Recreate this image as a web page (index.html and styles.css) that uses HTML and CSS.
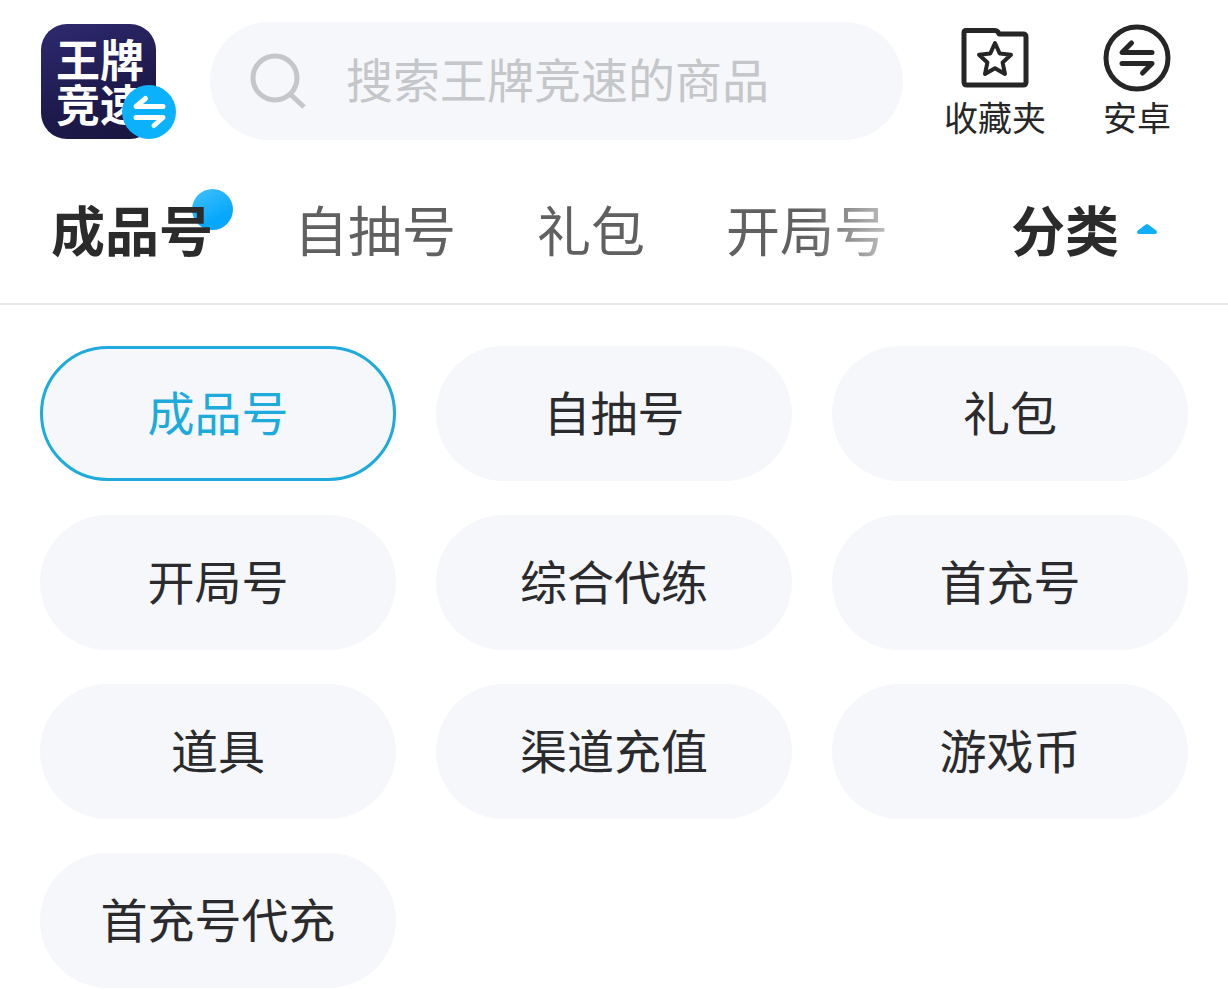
FILE: index.html
```html
<!DOCTYPE html>
<html lang="zh-CN">
<head>
    <meta charset="UTF-8">
    <meta name="viewport" content="width=device-width, initial-scale=1.0">
    <title>王牌竞速</title>
    <link rel="stylesheet" href="styles.css">
</head>
<body>
    <!-- Top bar: game logo, search, shortcuts -->
    <header class="header">
        <button class="game" aria-label="切换游戏">
            <span class="game-name">王牌<br>竞速</span>
            <svg class="game-switch" viewBox="0 0 54 54" fill="none" stroke="#fff" stroke-width="5" stroke-linecap="round" stroke-linejoin="round">
                <circle cx="27" cy="27" r="27" fill="#0bb2fb" stroke="none"/>
                <path d="M23.500 13.500 14 21.500H41M14 32.500H41L32 40.500"/>
            </svg>
        </button>

        <form class="search" role="search">
            <svg class="search-icon" viewBox="0 0 56 56" fill="none" stroke="#c5c6c9" stroke-width="5">
                <circle cx="25" cy="25" r="22"/>
                <path d="M39 40 54 54"/>
            </svg>
            <input class="search-input" type="text" placeholder="搜索王牌竞速的商品" aria-label="搜索">
        </form>

        <button class="action">
            <svg class="action-icon" viewBox="0 0 68 68" fill="none" stroke="#262626" stroke-width="5" stroke-linejoin="round" stroke-linecap="round">
                <path d="M5 6.500H34Q36 6.500 37 8L38 10H62Q65 10 65 13V58Q65 61 62 61H6Q3 61 3 58V9Q3 6.500 5 6.500Z"/>
                <path stroke-width="4" d="M34 19 38.700 29.500 50 30.800 41.600 38.500 44 50 34 44.200 24 50 26.400 38.500 18 30.800 29.300 29.500Z"/>
            </svg>
            <span>收藏夹</span>
        </button>
        <button class="action">
            <svg class="action-icon" viewBox="0 0 68 68" fill="none" stroke="#262626" stroke-width="5" stroke-linejoin="round" stroke-linecap="round">
                <circle cx="34" cy="34" r="31"/>
                <path d="M28.500 19 19 28.500H49M19 39.500H49L39.500 49"/>
            </svg>
            <span>安卓</span>
        </button>
    </header>

    <!-- Category tabs -->
    <nav class="tabs">
        <div class="tab-list">
            <a class="tab active" href="#">成品号</a>
            <a class="tab" href="#">自抽号</a>
            <a class="tab" href="#">礼包</a>
            <a class="tab" href="#">开局号</a>
        </div>
        <button class="toggle">
            分类
            <svg class="toggle-arrow" viewBox="0 0 22 12"><path fill="#0fb0f5" stroke="#0fb0f5" stroke-width="4" stroke-linejoin="round" d="M11 3 19 9H3Z"/></svg>
        </button>
    </nav>

    <!-- Expanded category list -->
    <main class="categories">
        <button class="category selected">成品号</button>
        <button class="category">自抽号</button>
        <button class="category">礼包</button>
        <button class="category">开局号</button>
        <button class="category">综合代练</button>
        <button class="category">首充号</button>
        <button class="category">道具</button>
        <button class="category">渠道充值</button>
        <button class="category">游戏币</button>
        <button class="category">首充号代充</button>
    </main>
</body>
</html>
```
FILE: styles.css
```css
* {
    box-sizing: border-box;
}
body {
    margin: 0;
    background-color: #fff;
    color: #2b2b2e;
    font-family: "Noto Sans CJK SC", sans-serif;
}
button,
input {
    padding: 0;
    border: none;
    background: none;
    color: inherit;
    font-family: inherit;
}
button {
    cursor: pointer;
}
a {
    color: inherit;
    text-decoration: none;
}
svg {
    display: block;
    flex: none;
}

/* Header */
.header {
    display: flex;
    align-items: center;
    padding: 21px 57px 0 41px;
}
.game {
    position: relative;
    flex: none;
    width: 115px;
    height: 115px;
    padding-left: 15px;
    border-radius: 26px;
    background: linear-gradient(160deg, #2f2a70, #1d1a4c 60%, #19163f);
    color: #fff;
    text-align: left;
}
.game-name {
    display: block;
    font-size: 44px;
    font-weight: bold;
    line-height: 45px;
    white-space: nowrap;
}
.game-switch {
    position: absolute;
    right: -20px;
    bottom: 0;
    width: 54px;
    height: 54px;
}
.search {
    display: flex;
    flex: 1;
    align-items: center;
    gap: 40px;
    min-width: 0;
    height: 118px;
    margin: 0 41px 0 54px;
    padding: 0 40px;
    border-radius: 59px;
    background-color: #f5f7fb;
}
.search-icon {
    width: 56px;
    height: 56px;
}
.search-input {
    flex: 1;
    min-width: 0;
    height: 80px;
    padding-bottom: 8px;
    font-size: 47px;
    outline: none;
}
.search-input::placeholder {
    color: #c5c6c9;
    opacity: 1;
}
.action {
    display: flex;
    flex: none;
    flex-direction: column;
    align-items: center;
    padding-top: 3px;
    color: #262626;
    font-size: 34px;
    line-height: 49px;
}
.action + .action {
    margin-left: 57px;
}
.action-icon {
    width: 68px;
    height: 68px;
}

/* Tabs */
.tabs {
    display: flex;
    align-items: center;
    justify-content: space-between;
    height: 164px;
    padding: 14px 70px 0 51px;
    border-bottom: 2px solid #e8e8e8;
    font-size: 54px;
    line-height: 80px;
}
.tab-list {
    display: flex;
    gap: 81px;
    overflow: hidden;
    padding: 20px 0;
    white-space: nowrap;
    -webkit-mask-image: linear-gradient(to left, rgba(0, 0, 0, 0.4), #000 80px);
    mask-image: linear-gradient(to left, rgba(0, 0, 0, 0.4), #000 80px);
}
.tab {
    position: relative;
    color: #606060;
}
.tab.active {
    color: #2b2b2b;
    font-weight: bold;
}
.tab.active::before {
    content: "";
    position: absolute;
    z-index: -1;
    top: 0;
    right: -20px;
    width: 41px;
    height: 41px;
    border-radius: 50%;
    background: linear-gradient(150deg, #45c0fb, #05a8fc 70%);
}
.toggle {
    display: flex;
    flex: none;
    align-items: center;
    gap: 17px;
    color: #2b2b2b;
    font-size: 54px;
    font-weight: bold;
    line-height: 80px;
}
.toggle-arrow {
    width: 22px;
    height: 12px;
}

/* Category grid */
.categories {
    display: grid;
    grid-template-columns: repeat(3, 1fr);
    gap: 34px 40px;
    padding: 41px 40px 0;
}
.category {
    height: 135px;
    padding-bottom: 6px;
    border-radius: 68px;
    background-color: #f5f7fb;
    font-size: 47px;
    white-space: nowrap;
}
.category.selected {
    border: 3px solid #1eabdc;
    color: #1eabdc;
}
```
